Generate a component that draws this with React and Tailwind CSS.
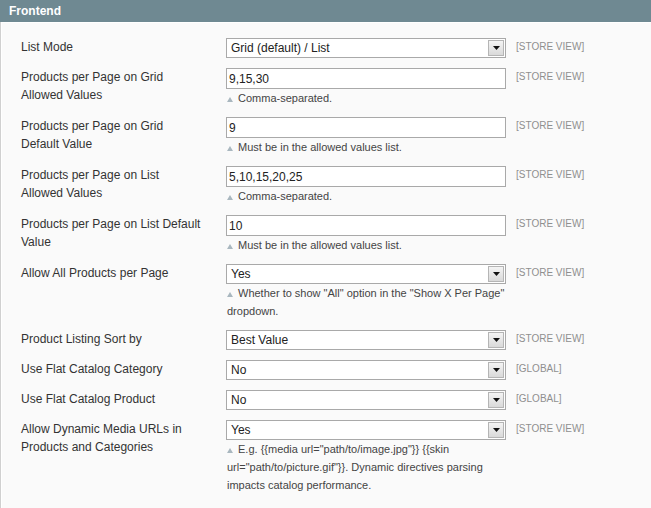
import React from "react";

const F = { fontFamily: '"Liberation Sans", Arial, sans-serif' };

function Select({ value }) {
  return (
    <div className="relative flex h-[20px] w-[280px] items-center border border-[#a9a9a9] bg-white pl-[4px] text-[12px] text-[#222]">
      <span>{value}</span>
      <div className="absolute right-[1px] top-[1px] flex h-[16px] w-[16px] items-center justify-center border border-[#b5b5b5] bg-gradient-to-b from-[#f4f4f4] to-[#d9d9d9]">
        <svg width="7" height="4" viewBox="0 0 7 4">
          <path d="M0 0h7L3.5 4z" fill="#111" />
        </svg>
      </div>
    </div>
  );
}

function Input({ value }) {
  return (
    <div className="flex h-[21px] w-[280px] items-center border border-[#a9a9a9] bg-white pl-[2px] text-[12px] text-[#222]">
      {value}
    </div>
  );
}

function Note({ children }) {
  return (
    <div className="h-auto w-[280px] pl-[1px] text-[11px] leading-[18px] text-[#444]">
      <svg width="6" height="5" viewBox="0 0 6 5" className="mr-[5px] inline align-baseline">
        <path d="M0 5L3 0L6 5z" fill="#a9b7bf" />
      </svg>
      {children}
    </div>
  );
}

function Row({ label, children, scope = "[STORE VIEW]" }) {
  return (
    <div className="flex py-[5px] pl-[20px]">
      <div className="w-[205px] pr-[10px] text-[12px] leading-[18px] text-[#333]">{label}</div>
      <div className="w-[280px]">{children}</div>
      <div className="ml-[10px] text-[10px] leading-[18px] text-[#8f8f8f]">{scope}</div>
    </div>
  );
}

export default function App() {
  return (
    <div style={F} className="h-[508px] w-[651px] overflow-hidden bg-[#fafafa]">
      <div className="flex h-[22px] items-center bg-[#6f8992] pl-[9px] text-[12px] font-bold text-white">
        Frontend
      </div>
      <div className="h-[486px] border-l border-[#d0d0d0] pt-[11px] shadow-[inset_1px_1px_0_#ffffff]">
        <Row label="List Mode">
          <Select value="Grid (default) / List" />
        </Row>
        <Row label={<>Products per Page on Grid<br />Allowed Values</>}>
          <Input value="9,15,30" />
          <Note>Comma-separated.</Note>
        </Row>
        <Row label={<>Products per Page on Grid<br />Default Value</>}>
          <Input value="9" />
          <Note>Must be in the allowed values list.</Note>
        </Row>
        <Row label={<>Products per Page on List<br />Allowed Values</>}>
          <Input value="5,10,15,20,25" />
          <Note>Comma-separated.</Note>
        </Row>
        <Row label={<>Products per Page on List Default<br />Value</>}>
          <Input value="10" />
          <Note>Must be in the allowed values list.</Note>
        </Row>
        <Row label="Allow All Products per Page">
          <Select value="Yes" />
          <Note>Whether to show "All" option in the "Show X Per Page" dropdown.</Note>
        </Row>
        <Row label="Product Listing Sort by">
          <Select value="Best Value" />
        </Row>
        <Row label="Use Flat Catalog Category" scope="[GLOBAL]">
          <Select value="No" />
        </Row>
        <Row label="Use Flat Catalog Product" scope="[GLOBAL]">
          <Select value="No" />
        </Row>
        <Row label={<>Allow Dynamic Media URLs in<br />Products and Categories</>}>
          <Select value="Yes" />
          <Note>
            E.g. {'{{media url="path/to/image.jpg"}} {{skin url="path/to/picture.gif"}}'}. Dynamic directives parsing impacts catalog performance.
          </Note>
        </Row>
      </div>
    </div>
  );
}
